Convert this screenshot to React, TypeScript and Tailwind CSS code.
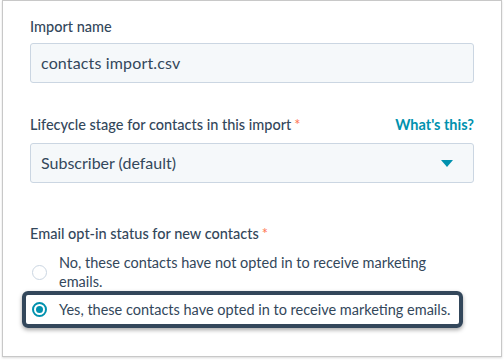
export default function App() {
  return (
    <div
      className="w-[504px] h-[362px] bg-white text-[#33475b] pt-px"
      style={{ fontFamily: "Lato, 'Open Sans', sans-serif" }}
    >
      <div className="mx-[2px] h-[357px] -mt-px border border-[#c8c8c8] shadow-[0_1px_2px_rgba(0,0,0,0.15)] px-[27px] pt-[17px]">
        {/* Import name */}
        <label className="block text-[14.5px] leading-[18px] font-medium">Import name</label>
        <div className="mt-[7px] h-[40px] rounded-[3px] border border-[#cbd6e2] bg-[#f5f8fa] flex items-center px-[10px] text-[16px] tracking-[0.15px]">
          contacts import.csv
        </div>

        {/* Lifecycle */}
        <div className="mt-[33px] flex items-center justify-between text-[14.5px] leading-[18px]">
          <span className="font-medium">
            Lifecycle stage for contacts in this import
            <span className="text-[#ff7a59] ml-[3px]">*</span>
          </span>
          <a className="font-bold text-[#0091ae]">What's this?</a>
        </div>
        <div className="mt-[9px] h-[40px] rounded-[3px] border border-[#cbd6e2] bg-[#f5f8fa] flex items-center justify-between px-[10px] text-[16px]">
          <span>Subscriber (default)</span>
          <svg width="12" height="7" viewBox="0 0 12 7" className="mr-[10px]">
            <path d="M0 0 H12 L6 7 Z" fill="#0091ae" />
          </svg>
        </div>

        {/* Email opt-in */}
        <div className="mt-[42px] text-[14.5px] leading-[18px] font-medium">
          Email opt-in status for new contacts
          <span className="text-[#ff7a59] ml-[3px]">*</span>
        </div>
        <div className="mt-[10px] flex items-center gap-[12px] pl-[2px] text-[14.5px] leading-[19px]">
          <span className="w-[15px] h-[15px] shrink-0 rounded-full border border-[#cbd6e2] bg-white" />
          <span className="w-[390px]">No, these contacts have not opted in to receive marketing emails.</span>
        </div>
        <div className="-ml-[8px] w-[441px] h-[37px] rounded-[6px] border-[4px] border-[#33475b] shadow-[0_2px_4px_rgba(0,0,0,0.35)] flex items-center gap-[12px] pl-[6px] text-[14.5px]">
          <span className="w-[15px] h-[15px] shrink-0 rounded-full border-[2px] border-[#0091ae] bg-white flex items-center justify-center">
            <span className="w-[7px] h-[7px] rounded-full bg-[#0091ae]" />
          </span>
          <span>Yes, these contacts have opted in to receive marketing emails.</span>
        </div>
      </div>
    </div>
  );
}
